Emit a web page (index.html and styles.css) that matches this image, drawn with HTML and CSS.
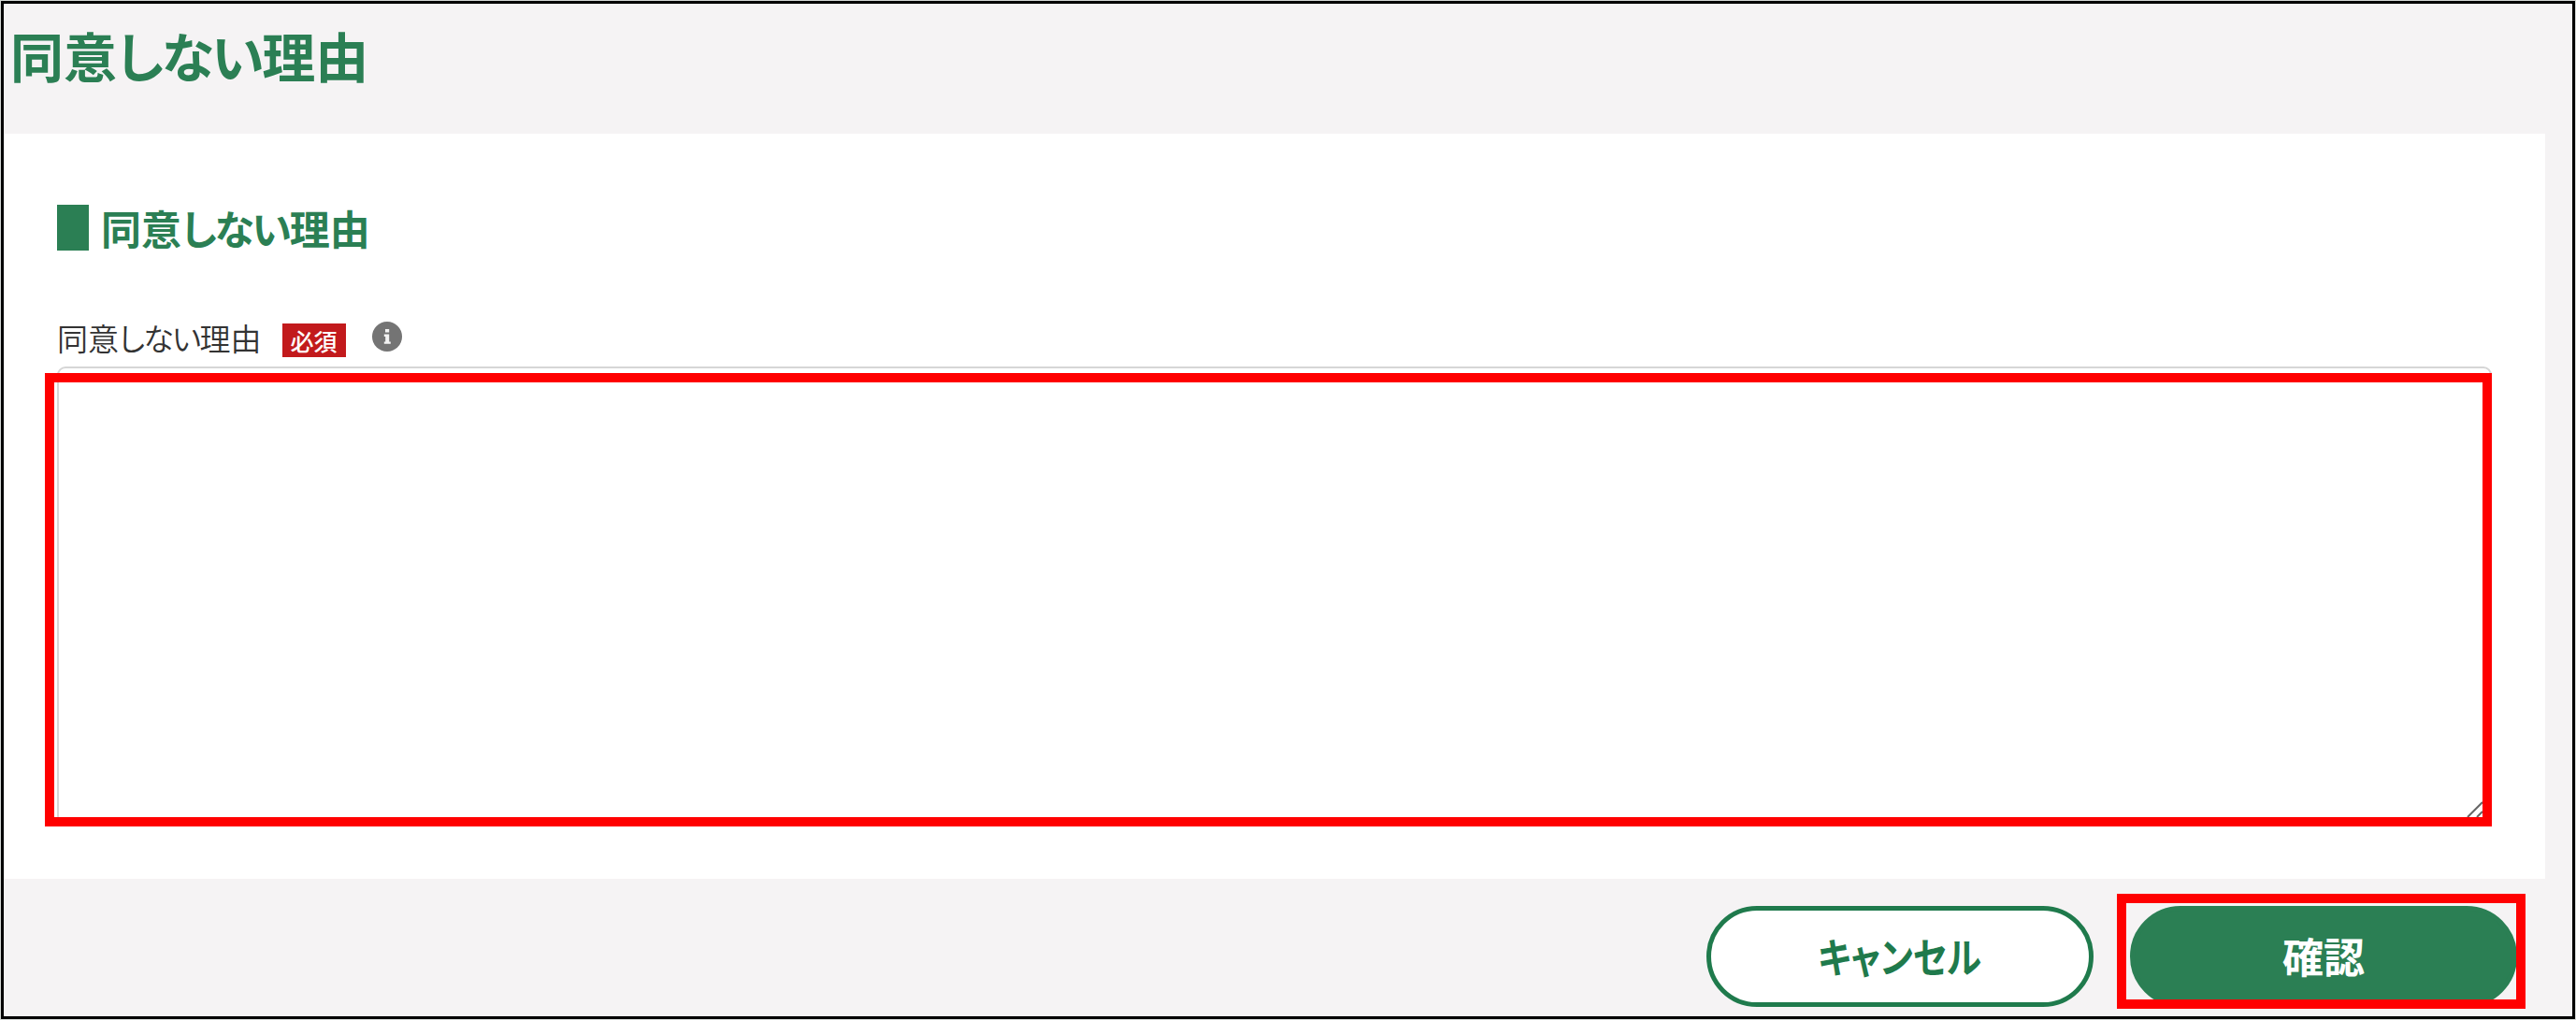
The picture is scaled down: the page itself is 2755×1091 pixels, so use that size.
FILE: index.html
```html
<!DOCTYPE html>
<html lang="ja">
<head>
    <meta charset="UTF-8">
    <meta name="viewport" content="width=device-width, initial-scale=1.0">
    <title>同意しない理由</title>
    <link rel="stylesheet" href="styles.css">
</head>
<body>
    <div class="page">
        <header class="header">
            <h1 class="page-title">同意<span class="kana">しない</span>理由</h1>
        </header>
        <main class="panel">
            <h2 class="section-title"><span>同意<span class="kana">しない</span>理由</span></h2>
            <div class="label-row">
                <label class="field-label" for="reason">同意<span class="kana">しない</span>理由</label>
                <span class="required">必須</span>
                <svg class="info-icon" viewBox="0 0 32 32">
                    <circle cx="16" cy="16" r="16" fill="#747474"/>
                    <path d="M14 8h4.2v3.4H14zM12.8 13.6h5.4v7.8h1.6v2.4h-7v-2.4h1.4v-5.4h-1.4z" fill="#f3f3f3"/>
                </svg>
            </div>
            <div class="field">
                <textarea id="reason" class="reason-input"></textarea>
                <svg class="resize-grip" viewBox="0 0 17 17">
                    <path d="M1 17L17 1M11 17L17 11" stroke="#666" stroke-width="2" fill="none"/>
                </svg>
                <div class="mark mark-field"></div>
            </div>
        </main>
        <footer class="actions">
            <button class="btn btn-cancel" type="button"><span class="narrow">キャンセル</span></button>
            <div class="confirm-wrap">
                <button class="btn btn-confirm" type="button">確認</button>
                <div class="mark mark-confirm"></div>
            </div>
        </footer>
    </div>
</body>
</html>
```
FILE: styles.css
```css
:root{
    --green: #2b7f54;
    --green-line: #1f7a4c;
    --page-background: #f5f3f4;
    --mark: #ff0000;
}

*{
    box-sizing: border-box;
    padding: 0;
    margin: 0;
}
body{
    height: 100vh;
    padding: 1px;
    background-color: #d3d6d4;
    font-family: "Noto Sans CJK JP", sans-serif;
    font-feature-settings: "palt";
    overflow: hidden;
}
.page{
    width: 2753px;
    height: 1089px;
    display: flex;
    flex-direction: column;
    border: 3px solid #000;
    background-color: var(--page-background);
}
.kana{
    letter-spacing: -0.05em;
}
.header{
    height: 139px;
    padding: 12px 0 0 7px;
}
.page-title{
    font-size: 57px;
    line-height: 84px;
    font-weight: 700;
    color: var(--green);
}
.page-title .kana{
    letter-spacing: -0.04em;
}
.panel{
    width: 2718px;
    height: 797px;
    padding: 73px 57px 0;
    background-color: #fff;
}
.section-title{
    display: flex;
    align-items: center;
    height: 54px;
    font-size: 43px;
    line-height: 54px;
    font-weight: 700;
    color: var(--green);
}
.section-title::before{
    content: '';
    width: 34px;
    height: 49px;
    margin-right: 13px;
    background-color: var(--green);
}
.label-row{
    display: flex;
    align-items: center;
    height: 54px;
    margin-top: 67px;
}
.field-label{
    margin-bottom: 6px;
    font-size: 33px;
    line-height: 48px;
    font-weight: 350;
    color: #333;
}
.required{
    width: 68px;
    height: 36px;
    margin-left: 22px;
    background-color: #c21a1c;
    font-size: 25px;
    font-weight: 500;
    line-height: 37px;
    text-align: center;
    color: #fff;
}
.info-icon{
    width: 32px;
    height: 32px;
    margin: 0 0 8px 28px;
}
.field{
    position: relative;
    height: 491px;
    padding-top: 1px;
}
.reason-input{
    display: block;
    width: 100%;
    height: 100%;
    border: 2px solid #d6d6d6;
    border-radius: 9px;
    outline: none;
    resize: none;
}
.resize-grip{
    position: absolute;
    right: 10px;
    bottom: 8px;
    width: 17px;
    height: 17px;
}
.mark{
    position: absolute;
    border: 10px solid var(--mark);
    pointer-events: none;
}
.mark-field{
    top: 8px;
    left: -13px;
    width: 2617px;
    height: 485px;
}
.actions{
    display: flex;
    justify-content: flex-end;
    gap: 39px;
    padding: 29px 59px 0 0;
}
.btn{
    display: block;
    width: 414px;
    height: 108px;
    padding-bottom: 2px;
    border: 5px solid var(--green-line);
    border-radius: 54px;
    font-family: inherit;
    font-feature-settings: inherit;
    font-size: 44px;
    font-weight: 700;
}
.btn-cancel{
    background-color: #fff;
    color: var(--green-line);
}
.btn-confirm{
    border-color: var(--green);
    background-color: var(--green);
    color: #fff;
}
.narrow{
    display: inline-block;
    transform: scaleX(0.86);
}
.confirm-wrap{
    position: relative;
}
.mark-confirm{
    top: -13px;
    left: -14px;
    width: 437px;
    height: 123px;
}
```
